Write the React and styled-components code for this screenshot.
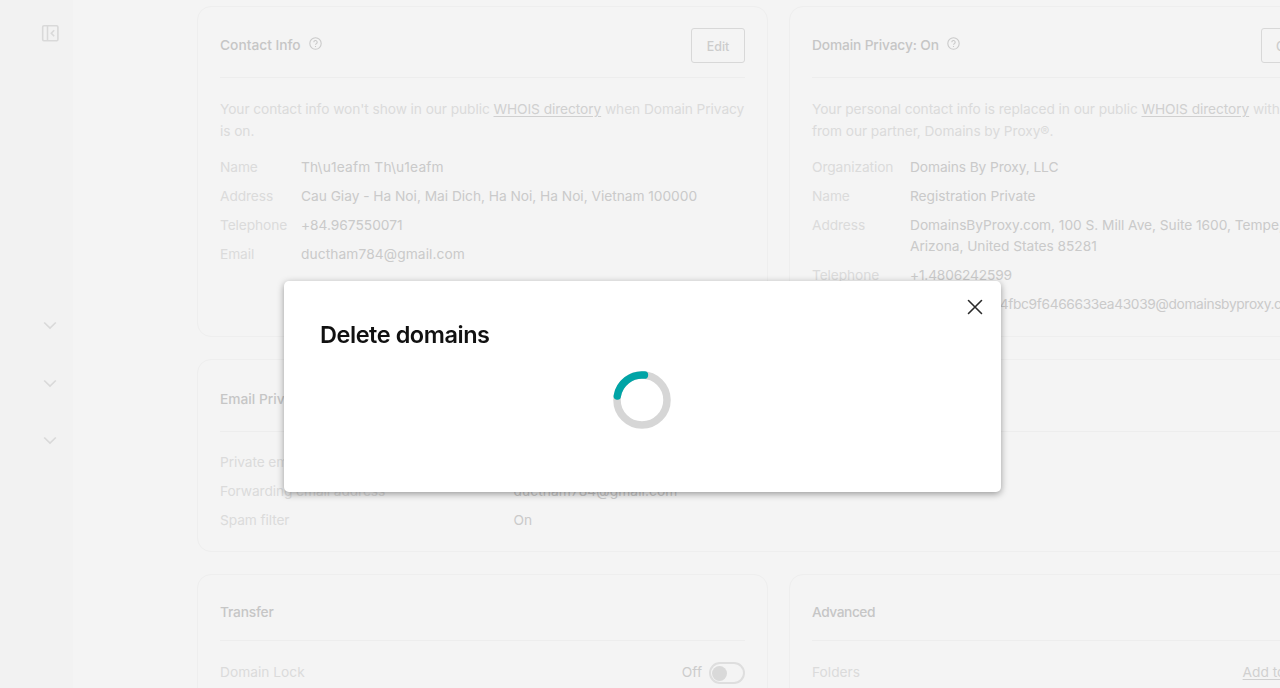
import React from "react";
import styled, { createGlobalStyle } from "styled-components";

const GlobalStyle = createGlobalStyle`
  * { box-sizing: border-box; }
  body {
    margin: 0;
    background: #f4f4f4;
    color: #c7c7c7;
    font-family: Inter, "Liberation Sans", sans-serif;
    font-size: 13.75px;
    line-height: 21.6px;
    overflow: hidden;
  }
`;

const Page = styled.div`
  display: flex;
  width: 100vw;
  height: 100vh;
  overflow: hidden;
`;

const Sidebar = styled.aside`
  flex: 0 0 73px;
  background: #f2f2f2;
  display: flex;
  flex-direction: column;
  align-items: flex-end;
  padding: 24px 14px 0 0;
`;

const NavToggles = styled.div`
  display: flex;
  flex-direction: column;
  gap: 39.5px;
  margin-top: 274.3px;
`;

const SidebarIcon = styled.svg`
  display: block;
  width: 18px;
  height: 18px;
  fill: none;
  stroke: #d9d9d9;
  stroke-width: 1.6;
`;

const Main = styled.main`
  flex: 1;
  min-width: 0;
  overflow: hidden;
  padding: 6px 0 0 124px;
`;

const Cards = styled.div`
  display: grid;
  grid-template-columns: 571px 571px;
  grid-template-rows: 331px 193px 200px;
  column-gap: 21px;
  row-gap: 22px;
`;

const Card = styled.section`
  grid-column: ${(p) => (p.$wide ? "1 / -1" : "auto")};
  border: 1px solid #eeeeee;
  border-radius: 14px;
  padding: 0 22px;
`;

const CardHeader = styled.header`
  display: flex;
  align-items: center;
  justify-content: space-between;
  height: ${(p) => p.$height}px;
  padding-top: ${(p) => p.$top}px;
  border-bottom: 1px solid #ededed;
  margin-bottom: 20px;
`;

const CardTitle = styled.h2`
  display: flex;
  align-items: center;
  gap: 8.5px;
  margin: 0;
  font-size: 13.75px;
  font-weight: 500;
  letter-spacing: ${(p) => p.$track || 0}px;
  color: #c6c6c6;
`;

const Help = styled.svg`
  width: 13px;
  height: 13px;
  margin-top: -4px;
  fill: none;
  stroke: #cacaca;
  stroke-width: 1.1;
`;

const Button = styled.button`
  flex: none;
  width: ${(p) => p.$width}px;
  height: 35px;
  padding: 2px 0 0;
  border: 1px solid #d8d8d8;
  border-radius: 3px;
  background: transparent;
  color: #cccccc;
  font: 500 12.4px Inter, "Liberation Sans", sans-serif;
`;

const Intro = styled.p`
  margin: 0 -10px 14.8px 0;
  color: #dbdbdb;
  line-height: 22px;
  letter-spacing: -0.085px;
  white-space: nowrap;
`;

const Link = styled.a`
  margin-right: ${(p) => p.$inset || 0}px;
  color: #d0d0d0;
  text-decoration: underline;
  text-underline-offset: 2px;
`;

const Details = styled.dl`
  display: grid;
  grid-template-columns: ${(p) => p.$label}px 1fr;
  row-gap: 7.4px;
  margin: 0;
`;

const Label = styled.dt`
  color: #dbdbdb;
  letter-spacing: -0.1px;
`;

const Value = styled.dd`
  margin: 0;
  color: #cacaca;
  white-space: nowrap;
  letter-spacing: ${(p) => p.$track || 0}px;
`;

const Setting = styled.div`
  display: flex;
  justify-content: space-between;
  align-items: center;
  padding-top: ${(p) => p.$top || 0}px;
  color: #dbdbdb;
`;

const SwitchGroup = styled.span`
  display: flex;
  align-items: center;
  gap: 7px;
  color: #cccccc;
`;

const Switch = styled.span`
  display: flex;
  align-items: center;
  width: 36px;
  height: 22px;
  padding-left: 1px;
  border: 2px solid #dedede;
  border-radius: 11px;

  &::before {
    content: "";
    width: 15px;
    height: 15px;
    border-radius: 50%;
    background: #d9d9d9;
  }
`;

const Dialog = styled.div`
  position: fixed;
  left: 284px;
  top: 281px;
  width: 717px;
  height: 211px;
  padding: 38px 36px 0;
  border-radius: 5px;
  background: #ffffff;
  box-shadow: 0 2px 7px rgba(0, 0, 0, 0.38);
`;

const DialogTitle = styled.h1`
  margin: 0 0 19.5px;
  color: #111111;
  font-size: 23.5px;
  font-weight: 600;
  line-height: 32px;
  letter-spacing: -0.45px;
`;

const Close = styled.button`
  position: absolute;
  top: 18px;
  right: 18px;
  width: 16px;
  height: 16px;
  padding: 0;
  border: 0;
  background: none;

  svg {
    display: block;
    stroke: #2b2b2b;
    stroke-width: 1.6;
    stroke-linecap: round;
  }
`;

const Spinner = styled.svg`
  display: block;
  margin: 0 0 0 293.4px;
  width: 58px;
  height: 58px;
  fill: none;
  stroke-width: 7.5;
`;

const HelpIcon = () => (
  <Help viewBox="0 0 13 13">
    <circle cx="6.5" cy="6.5" r="5.7" />
    <path d="M4.8 5.3a1.7 1.7 0 1 1 2.5 1.4c-.5.3-.8.5-.8 1.1M6.5 8.9v1" />
  </Help>
);

const Chevron = () => (
  <SidebarIcon viewBox="0 0 18 18">
    <path d="M3.2 6.5 9 12.1l5.8-5.6" />
  </SidebarIcon>
);

export default function App() {
  return (
    <>
      <GlobalStyle />
      <Page>
        <Sidebar>
          <SidebarIcon viewBox="0 0 18 18">
            <rect x="1.7" y="1.7" width="15.2" height="15" rx="1.2" />
            <path d="M6.5 1.7v15M13.2 6.2 10.3 9.2l2.9 3" />
          </SidebarIcon>
          <NavToggles>
            <Chevron />
            <Chevron />
            <Chevron />
          </NavToggles>
        </Sidebar>
        <Main>
          <Cards>
            <Card>
              <CardHeader $height={71} $top={7}>
                <CardTitle>Contact Info <HelpIcon /></CardTitle>
                <Button $width={54}>Edit</Button>
              </CardHeader>
              <Intro>
                Your contact info won't show in our public <Link>WHOIS directory</Link> when Domain Privacy
                <br />
                is on.
              </Intro>
              <Details $label={81}>
                <Label>Name</Label>
                <Value $track={0.15}>Th\u1eafm Th\u1eafm</Value>
                <Label>Address</Label>
                <Value $track={-0.03}>Cau Giay - Ha Noi, Mai Dich, Ha Noi, Ha Noi, Vietnam 100000</Value>
                <Label>Telephone</Label>
                <Value $track={-0.02}>+84.967550071</Value>
                <Label>Email</Label>
                <Value $track={0.1}>ductham784@gmail.com</Value>
              </Details>
            </Card>
            <Card>
              <CardHeader $height={71} $top={7}>
                <CardTitle $track={-0.14}>Domain Privacy: On <HelpIcon /></CardTitle>
                <Button $width={76}>Change</Button>
              </CardHeader>
              <Intro>
                Your personal contact info is replaced in our public <Link>WHOIS directory</Link> with info
                <br />
                from our partner, Domains by Proxy®.
              </Intro>
              <Details $label={98}>
                <Label>Organization</Label>
                <Value $track={-0.1}>Domains By Proxy, LLC</Value>
                <Label>Name</Label>
                <Value $track={-0.05}>Registration Private</Value>
                <Label>Address</Label>
                <Value $track={-0.04}>
                  DomainsByProxy.com, 100 S. Mill Ave, Suite 1600, Tempe,
                  <br />
                  Arizona, United States 85281
                </Value>
                <Label>Telephone</Label>
                <Value $track={-0.17}>+1.4806242599</Value>
                <Label>Email</Label>
                <Value $track={-0.35}>1d5e2c9a8b614fbc9f6466633ea43039@domainsbyproxy.com</Value>
              </Details>
            </Card>
            <Card $wide>
              <CardHeader $height={72} $top={8}>
                <CardTitle>Email Privacy</CardTitle>
              </CardHeader>
              <Details $label={293.5}>
                <Label>Private email address</Label>
                <Value />
                <Label>Forwarding email address</Label>
                <Value $track={0.1}>ductham784@gmail.com</Value>
                <Label>Spam filter</Label>
                <Value>On</Value>
              </Details>
            </Card>
            <Card>
              <CardHeader $height={66} $top={10}>
                <CardTitle $track={-0.2}>Transfer</CardTitle>
              </CardHeader>
              <Setting $top={1}>
                Domain Lock
                <SwitchGroup>Off <Switch /></SwitchGroup>
              </Setting>
            </Card>
            <Card>
              <CardHeader $height={66} $top={10}>
                <CardTitle $track={-0.45}>Advanced</CardTitle>
              </CardHeader>
              <Setting $top={1}>
                Folders
                <Link $inset={7}>Add to Folder</Link>
              </Setting>
            </Card>
          </Cards>
        </Main>
      </Page>
      <Dialog>
        <Close aria-label="Close">
          <svg width="16" height="16" viewBox="0 0 16 16">
            <path d="M1.5 1.5l13 13M14.5 1.5l-13 13" />
          </svg>
        </Close>
        <DialogTitle>Delete domains</DialogTitle>
        <Spinner viewBox="0 0 58 58">
          <circle cx="29" cy="29" r="25" stroke="#d6d6d6" />
          <path d="M31.4 4.1A25 25 0 0 0 4.3 25" stroke="#00a4a6" strokeLinecap="round" />
        </Spinner>
      </Dialog>
    </>
  );
}
